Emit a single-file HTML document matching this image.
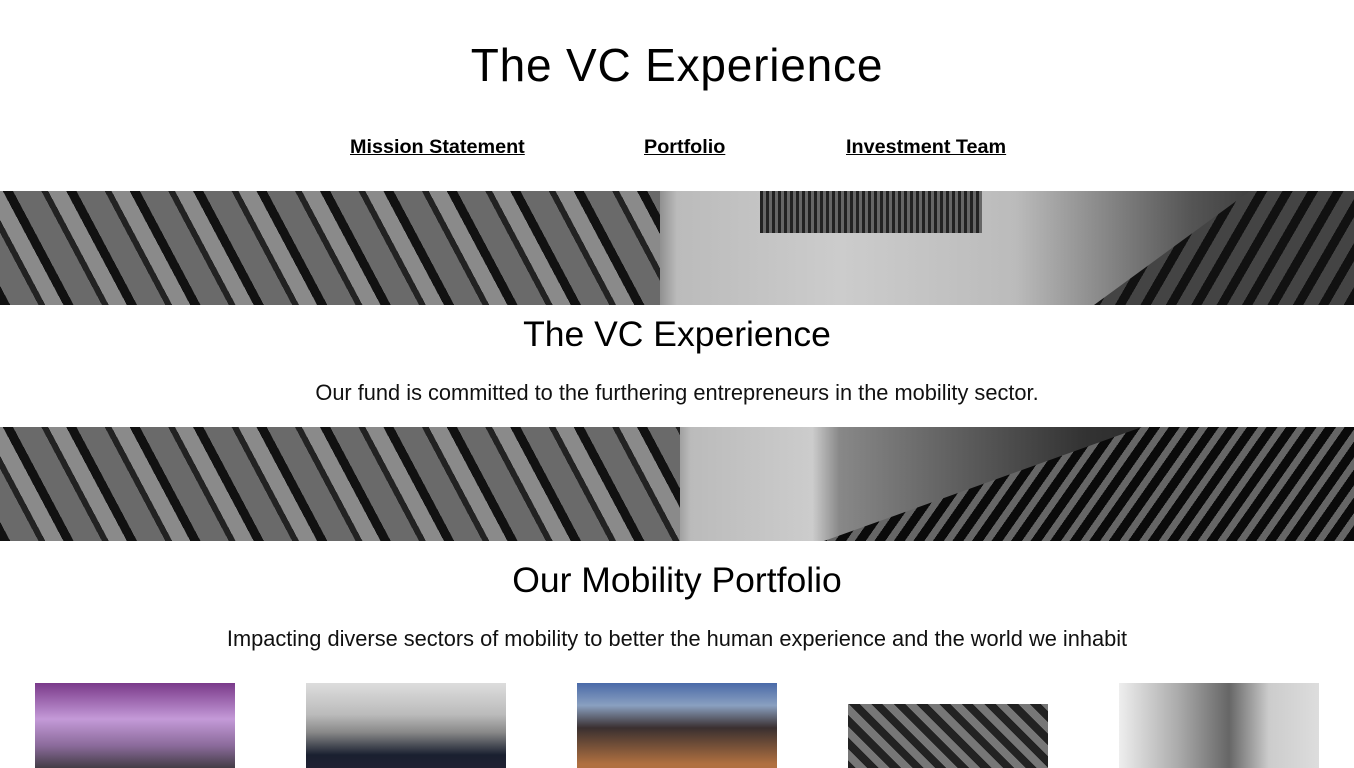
<!DOCTYPE html>
<html><head><meta charset="utf-8"><style>
*{margin:0;padding:0;box-sizing:border-box}
html,body{width:1354px;height:768px;overflow:hidden}
body{background:#fff;font-family:"Liberation Sans",sans-serif;color:#000;position:relative}
.a{position:absolute;left:0;width:1354px;text-align:center}
h1{font-weight:400;font-size:46px;letter-spacing:0.8px}
h2{font-weight:400;font-size:35.5px}
p{font-size:21.8px;color:#111}
.nav a{position:absolute;top:136px;font-size:19.8px;font-weight:700;color:#000;text-decoration:underline}
.ban{position:absolute;left:0;width:1354px;height:114px;overflow:hidden;background:linear-gradient(90deg,#2a2a2a 0,#555 30%,#777 48%,#bbb 50%,#ccc 62%,#bbb 75%,#555 88%,#1a1a1a 100%)}
.ban .l{position:absolute;left:0;top:0;height:114px;width:660px;background:repeating-linear-gradient(62deg,#111 0 9px,#6a6a6a 9px 34px,#222 34px 40px,#8a8a8a 40px 56px)}
.ban .r{position:absolute;right:0;top:0;height:114px;width:260px;background:repeating-linear-gradient(-60deg,#111 0 9px,#444 9px 22px);clip-path:polygon(60% 0,100% 0,100% 100%,0 100%)}
.th{position:absolute;width:200px;height:90px}
</style></head><body>
<h1 class="a" style="top:38px">The VC Experience</h1>
<div class="nav"><a style="left:350px">Mission Statement</a><a style="left:644px">Portfolio</a><a style="left:846px">Investment Team</a></div>
<div class="ban" style="top:191px"><div class="l"></div><div style="position:absolute;left:760px;top:0;width:222px;height:42px;background:repeating-linear-gradient(90deg,#222 0 3px,#666 3px 6px)"></div><div class="r"></div></div>
<h2 class="a" style="top:314px">The VC Experience</h2>
<p class="a" style="top:380px">Our fund is committed to the furthering entrepreneurs in the mobility sector.</p>
<div class="ban" style="top:427px;background:linear-gradient(90deg,#1a1a1a 0,#555 30%,#777 49%,#bbb 51%,#ccc 60%,#888 62%,#333 80%,#111 100%)"><div class="l" style="width:680px"></div><div class="r" style="width:530px;background:repeating-linear-gradient(-55deg,#0a0a0a 0 9px,#666 9px 16px)"></div></div>
<h2 class="a" style="top:560px">Our Mobility Portfolio</h2>
<p class="a" style="top:626px">Impacting diverse sectors of mobility to better the human experience and the world we inhabit</p>
<div class="th" style="left:35px;top:683px;background:linear-gradient(180deg,#7a3a8a,#c49ad8 40%,#8a6a9a 70%,#333)"></div>
<div class="th" style="left:306px;top:683px;background:linear-gradient(180deg,#ddd,#bbb 35%,#888 55%,#1a2030 80%,#223)"></div>
<div class="th" style="left:577px;top:683px;background:linear-gradient(180deg,#4a6aa8,#8aa0c0 25%,#3a3030 50%,#b07040 90%)"></div>
<div class="th" style="left:848px;top:704px;background:repeating-linear-gradient(45deg,#222 0 8px,#777 8px 16px)"></div>
<div class="th" style="left:1119px;top:683px;background:linear-gradient(90deg,#eee,#aaa 30%,#666 55%,#ccc 75%,#ddd)"></div>
</body></html>
